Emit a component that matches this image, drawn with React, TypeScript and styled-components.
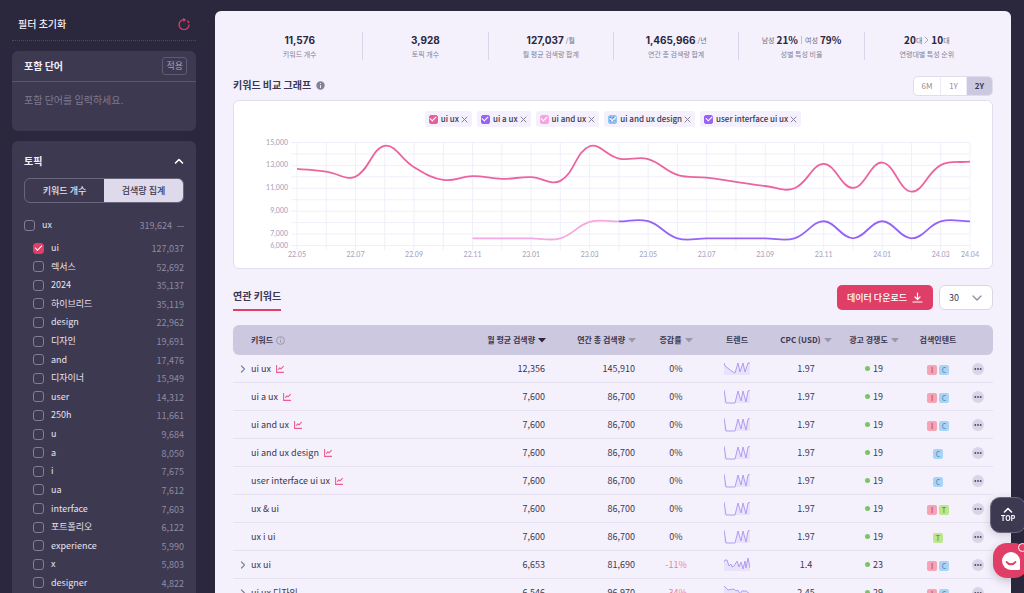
import React, { useState } from "react";
import styled, { createGlobalStyle, css } from "styled-components";

const ink = "#3b3750";
const night = "#2b273d";
const rose = "#e03e66";
const mist = "#f4f1fc";
const lilac = "#ccc8df";

const GlobalStyle = createGlobalStyle`
  * { box-sizing: border-box; }
  body {
    margin: 0;
    background: ${night};
    color: ${ink};
    font-family: "Noto Sans CJK KR", "Noto Sans", sans-serif;
    font-size: 9px;
    line-height: 12px;
  }
  button, input, select, textarea { font: inherit; color: inherit; }
  button { cursor: pointer; }
  h2, p, ul, dl, dd { margin: 0; padding: 0; }
`;

const Page = styled.div`
  display: flex;
  height: 100vh;
  overflow: hidden;
`;

/* ---------- sidebar ---------- */

const Sidebar = styled.aside`
  flex: 0 0 215px;
  display: flex;
  flex-direction: column;
  gap: 10px;
  padding: 8px 19px 0 12px;
  color: #f1eefa;
`;

const ResetBar = styled.div`
  display: flex;
  align-items: center;
  justify-content: space-between;
  height: 33px;
  padding: 0 6px;
  border-bottom: 1px dotted #4c4862;
  font-size: 10px;
  font-weight: 500;
`;

const IconButton = styled.button`
  display: inline-flex;
  align-items: center;
  justify-content: center;
  padding: 0;
  border: 0;
  background: none;
`;

const Card = styled.section<{ $fill?: boolean }>`
  display: flex;
  flex-direction: column;
  border-radius: 6px;
  background: #3d3951;
  ${(p) =>
    p.$fill &&
    css`
      flex: 1;
      border-radius: 6px 6px 0 0;
    `}
`;

const CardHead = styled.div<{ $line?: boolean }>`
  display: flex;
  align-items: center;
  justify-content: space-between;
  height: 31px;
  padding: ${(p) => (p.$line ? "0 9px 0 12px" : "9px 12px 0")};
  border-bottom: ${(p) => (p.$line ? "1px solid #5a566d" : "0")};
`;

const CardTitle = styled.h2`
  font-size: 10px;
  font-weight: 700;
`;

const ApplyButton = styled.button`
  height: 18px;
  padding: 0 3px;
  border: 1px solid #5f5b73;
  border-radius: 3px;
  background: none;
  color: #a5a1b6;
`;

const WordInput = styled.textarea`
  display: block;
  width: 100%;
  height: 49px;
  padding: 12px;
  border: 0;
  outline: 0;
  resize: none;
  background: none;
  font-size: 10px;
  &::placeholder { color: #7d798f; opacity: 1; }
`;

const Switch = styled.div`
  display: flex;
  height: 25px;
  margin: 6px 12px 13px;
  border: 1px solid #69657d;
  border-radius: 6px;
  overflow: hidden;
`;

const SwitchButton = styled.button<{ $on?: boolean }>`
  flex: 1;
  padding: 0;
  border: 0;
  font-weight: 500;
  background: ${(p) => (p.$on ? "#dedaec" : "transparent")};
  color: ${(p) => (p.$on ? ink : "#e6e3f0")};
`;

const Check = styled.input<{ $tone?: string; $small?: boolean; $dotted?: boolean }>`
  appearance: none;
  flex: none;
  display: grid;
  place-items: center;
  width: ${(p) => (p.$small ? 9 : 11)}px;
  height: ${(p) => (p.$small ? 9 : 11)}px;
  margin: 0;
  border: 1px solid #827e95;
  border-radius: ${(p) => (p.$small ? 2 : 3)}px;
  &:checked {
    border-color: ${(p) => p.$tone ?? rose};
    background: ${(p) =>
      p.$dotted
        ? `radial-gradient(circle, #6f86ea 25%, ${p.$tone} 60%) 0 0 / 3px 3px`
        : p.$tone ?? rose};
  }
  &:checked::after {
    content: "";
    width: ${(p) => (p.$small ? 5 : 6)}px;
    height: 3px;
    margin-bottom: 2px;
    border: solid #fff;
    border-width: 0 0 1px 1px;
    transform: rotate(-45deg);
  }
`;

const TopicRow = styled.div<{ $root?: boolean }>`
  display: flex;
  align-items: center;
  justify-content: space-between;
  height: 18px;
  margin: ${(p) => (p.$root ? "0 12px 5px" : "0 12px 0 21px")};
  color: #8f8ba1;
`;

const TopicLabel = styled.label`
  display: flex;
  align-items: center;
  gap: 7px;
  color: #e6e3f0;
`;

const TopicTotal = styled.span`
  display: flex;
  align-items: center;
  gap: 5px;
  padding-top: 2px;
`;

const Dash = styled.i`
  width: 7px;
  height: 1px;
  background: #706c84;
`;

const TopicList = styled.div`
  flex: 1;
  display: flex;
  flex-direction: column;
  justify-content: space-between;
  padding-bottom: 1px;
`;

/* ---------- main panel ---------- */

const Panel = styled.main`
  flex: 1;
  min-width: 0;
  margin: 11px 13px 0 0;
  padding: 21px 18px 0;
  border-radius: 6px 6px 0 0;
  background: ${mist};
  overflow: hidden;
`;

const Stats = styled.dl`
  display: grid;
  grid-template-columns: repeat(6, 1fr);
  padding: 0 4px;
`;

const Stat = styled.div`
  display: flex;
  flex-direction: column-reverse;
  align-items: center;
  justify-content: center;
  gap: 3px;
  height: 28px;
  & + & { border-left: 1px solid #dad5ea; }
`;

const StatLabel = styled.dt`
  font-size: 7px;
  line-height: 10px;
  color: #858199;
`;

const StatValue = styled.dd`
  display: flex;
  align-items: center;
  gap: 2px;
  font-size: 7px;
  color: #6f6b85;
  white-space: nowrap;
`;

const Figure = styled.b<{ $geometric?: boolean }>`
  font-family: ${(p) => (p.$geometric ? "Inter, " : "")}"Noto Sans CJK KR", sans-serif;
  font-size: 10px;
  font-weight: 700;
  color: ${night};
`;

const Age = styled.span`
  display: flex;
  align-items: center;
`;

const Pipe = styled.i`
  width: 1px;
  height: 8px;
  margin: 0 1px;
  background: #c3bfd3;
`;

const SectionBar = styled.div`
  display: flex;
  align-items: center;
  justify-content: space-between;
`;

const ChartBar = styled(SectionBar)`
  margin: 16px 0 4px;
`;

const Heading = styled.h2`
  display: flex;
  align-items: center;
  gap: 5px;
  padding-bottom: 2px;
  font-size: 10px;
  font-weight: 700;
`;

const Ranges = styled.div`
  display: flex;
  height: 20px;
  border: 1px solid #e0dced;
  border-radius: 5px;
  background: #fff;
  overflow: hidden;
`;

const RangeButton = styled.button<{ $on?: boolean }>`
  width: 26px;
  padding: 0;
  border: 0;
  font-size: 8px;
  font-weight: ${(p) => (p.$on ? 700 : 400)};
  background: ${(p) => (p.$on ? lilac : "transparent")};
  color: ${(p) => (p.$on ? ink : "#8f8ba1")};
  & + & { border-left: 1px solid #eeebf6; }
`;

const ChartCard = styled.section`
  padding-top: 10px;
  border: 1px solid #e2deef;
  border-radius: 6px;
  background: #fff;
`;

const Legend = styled.div`
  display: flex;
  justify-content: center;
  gap: 5px;
`;

const Chip = styled.div`
  display: flex;
  align-items: center;
  gap: 2px;
  height: 16px;
  padding: 0 4px;
  border-radius: 3px;
  background: ${mist};
`;

const ChipLabel = styled.label`
  display: flex;
  align-items: center;
  gap: 3px;
  font-size: 8px;
  font-weight: 500;
  white-space: nowrap;
`;

const ChartSvg = styled.svg`
  display: block;
  width: 100%;
  height: auto;
  text { font: 500 7px Lato, sans-serif; fill: #aaa6bf; }
`;

const TableBar = styled(SectionBar)`
  margin: 15px 0 14px;
`;

const Tab = styled.h2`
  margin-top: 3px;
  padding: 3px 0 7px;
  border-bottom: 2px solid ${rose};
  font-size: 10px;
  font-weight: 700;
`;

const Tools = styled.div`
  display: flex;
  gap: 6px;
`;

const DownloadButton = styled.button`
  display: flex;
  align-items: center;
  gap: 5px;
  height: 25px;
  padding: 0 10px;
  border: 0;
  border-radius: 5px;
  background: ${rose};
  color: #fff;
  font-weight: 500;
`;

const SelectBox = styled.div`
  display: grid;
  align-items: center;
  width: 54px;
  & > * { grid-area: 1 / 1; }
  svg { justify-self: end; margin-right: 11px; pointer-events: none; }
`;

const SizeSelect = styled.select`
  appearance: none;
  width: 100%;
  height: 25px;
  padding: 0 9px;
  border: 1px solid #dad6e8;
  border-radius: 6px;
  background: #fff;
`;

const Table = styled.table`
  width: 100%;
  table-layout: fixed;
  border-collapse: separate;
  border-spacing: 0;
`;

type Align = "left" | "right" | "center";

const HeadCell = styled.th<{ $align: Align; $width?: number }>`
  width: ${(p) => (p.$width ? `${p.$width}px` : "auto")};
  height: 30px;
  padding: ${(p) => (p.$align === "right" ? "0 11px 0 0" : p.$align === "left" ? "0 0 0 18px" : "0")};
  background: ${lilac};
  font-size: 8px;
  font-weight: 700;
  text-align: ${(p) => p.$align};
  white-space: nowrap;
  &:first-child { border-radius: 6px 0 0 6px; }
  &:last-child { border-radius: 0 6px 6px 0; }
`;

const HeadInner = styled.span`
  display: inline-flex;
  align-items: center;
  gap: 3px;
`;

const SortButton = styled.button`
  display: inline-flex;
  align-items: center;
  gap: 3px;
  padding: 0;
  border: 0;
  background: none;
`;

const Cell = styled.td<{ $align?: Align; $drop?: boolean }>`
  height: 28px;
  padding: ${(p) => (p.$align === "right" ? "0 12px 0 0" : p.$align === "left" ? "0 0 0 7px" : "0")};
  border-bottom: 1px solid #e5e1f0;
  text-align: ${(p) => p.$align ?? "center"};
  color: ${(p) => (p.$drop ? "#ee7f9b" : ink)};
  white-space: nowrap;
  svg { vertical-align: middle; }
`;

const ActionCell = styled(Cell)`
  padding-right: 8px;
`;

const Keyword = styled.div`
  display: grid;
  grid-template-columns: 6px auto 1fr;
  align-items: center;
  column-gap: 5px;
`;

const Rivalry = styled.span`
  display: inline-flex;
  align-items: center;
  gap: 3px;
  &::before {
    content: "";
    width: 5px;
    height: 5px;
    border-radius: 50%;
    background: #7cc462;
  }
`;

const Intents = styled.div`
  display: flex;
  justify-content: center;
  gap: 2px;
  padding-top: 2px;
`;

const tones: Record<string, [string, string]> = {
  I: ["#f6a3b2", "#b8405c"],
  C: ["#a9d4f5", "#5c8fbd"],
  T: ["#bfe48c", "#5f9a3c"],
};

const Intent = styled.span<{ $kind: string }>`
  width: 10px;
  height: 10px;
  border-radius: 2px;
  background: ${(p) => tones[p.$kind][0]};
  color: ${(p) => tones[p.$kind][1]};
  font-size: 7px;
  font-weight: 500;
  line-height: 10px;
  text-align: center;
`;

const MoreButton = styled(IconButton)`
  width: 12px;
  height: 12px;
  border-radius: 50%;
  background: #d9d5e8;
  vertical-align: middle;
`;

/* ---------- floating buttons ---------- */

const TopButton = styled.button`
  position: fixed;
  right: -2px;
  bottom: 60px;
  display: flex;
  flex-direction: column;
  align-items: center;
  justify-content: center;
  gap: 1px;
  width: 36px;
  height: 36px;
  padding: 0;
  border: 1px solid #6a667c;
  border-radius: 10px;
  background: #3d3951;
  color: #fff;
  font-family: Inter, sans-serif;
  font-size: 7px;
  font-weight: 700;
  line-height: 10px;
  box-shadow: 0 2px 8px rgba(43, 39, 61, 0.2);
`;

const ChatButton = styled.button`
  position: fixed;
  right: -4px;
  bottom: 15px;
  display: grid;
  place-items: center;
  width: 35px;
  height: 35px;
  padding: 0;
  border: 0;
  border-radius: 14px;
  background: ${rose};
  box-shadow: 0 3px 8px rgba(43, 39, 61, 0.25);
`;

const Unread = styled.i`
  position: absolute;
  top: 0;
  right: 1px;
  width: 9px;
  height: 9px;
  border: 1px solid #fff;
  border-radius: 50%;
  background: ${rose};
`;

/* ---------- icons ---------- */

interface StrokeProps {
  d: string;
  w: number;
  h: number;
  color?: string;
  width?: number;
}

const Stroke = ({ d, w, h, color = "currentColor", width = 1 }: StrokeProps) => (
  <svg width={w} height={h} viewBox={`0 0 ${w} ${h}`} fill="none" stroke={color} strokeWidth={width} strokeLinecap="round" strokeLinejoin="round" aria-hidden>
    <path d={d} />
  </svg>
);

const ResetIcon = () => (
  <svg width="12" height="12" viewBox="0 0 12 12" fill="none" aria-hidden>
    <path d="M6 1.600A5 5 0 1 0 11.100 6.600M11 5.200A5 5 0 0 0 9.400 2.700" stroke={rose} strokeWidth="1.300" />
    <path d="M5 0 8.300 1.700 5.400 3.900z" fill={rose} />
  </svg>
);

const Triangle = ({ on }: { on?: boolean }) => (
  <svg width="8" height="5" viewBox="0 0 8 5" aria-hidden>
    <path d="M0 0h8L4 4.6z" fill={on ? night : "#9a96ab"} />
  </svg>
);

const MiniChart = () => <Stroke w={8} h={8} color="#ee5c92" width={1.1} d="M.6.5v6.900h6.900M2.500 4.500 3.800 2.800l1.200 1 2.400-2.500" />;

const SolidInfo = () => (
  <svg width="9" height="9" viewBox="0 0 9 9" aria-hidden>
    <circle cx="4.5" cy="4.5" r="4.2" fill="#858199" />
    <path d="M4.5 4v3M4.5 2v1" stroke="#e9e6f3" />
  </svg>
);

const OutlineInfo = () => (
  <svg width="9" height="9" viewBox="0 0 9 9" fill="none" stroke="#918da4" strokeWidth=".8" aria-hidden>
    <circle cx="4.5" cy="4.5" r="3.9" />
    <path d="M4.5 4v2.6M4.5 2.2v.9" />
  </svg>
);

const Dots = () => (
  <svg width="8" height="2" viewBox="0 0 8 2" fill="#4b475f" aria-hidden>
    <circle cx="1.3" cy="1" r=".9" />
    <circle cx="4" cy="1" r=".9" />
    <circle cx="6.7" cy="1" r=".9" />
  </svg>
);

/* ---------- data ---------- */

const topics: [string, string][] = [
  ["ui", "127,037"], ["렉서스", "52,692"], ["2024", "35,137"], ["하이브리드", "35,119"],
  ["design", "22,962"], ["디자인", "19,691"], ["and", "17,476"], ["디자이너", "15,949"],
  ["user", "14,312"], ["250h", "11,661"], ["u", "9,684"], ["a", "8,050"], ["i", "7,675"],
  ["ua", "7,612"], ["interface", "7,603"], ["포트폴리오", "6,122"], ["experience", "5,990"],
  ["x", "5,803"], ["designer", "4,822"],
];

const legend: { name: string; tone: string; dotted?: boolean }[] = [
  { name: "ui ux", tone: "#ee5c9a" },
  { name: "ui a ux", tone: "#9a63f7" },
  { name: "ui and ux", tone: "#f3a6dc" },
  { name: "ui and ux design", tone: "#8cc4f2", dotted: true },
  { name: "user interface ui ux", tone: "#9a63f7" },
];

const dip = "0,0 1,6 2,13 11,13 14,1 17,11 19,1 22,12 24,1 26,0";

interface Row {
  word: string;
  open?: boolean;
  charted?: boolean;
  month: string;
  year: string;
  change: string;
  trend: string;
  cpc: string;
  rival: number;
  intents: string;
}

const base = { month: "7,600", year: "86,700", change: "0%", trend: dip, cpc: "1.97", rival: 19 };

const rows: Row[] = [
  { ...base, word: "ui ux", open: true, charted: true, month: "12,356", year: "145,910", trend: "0,1 1,4 5,7 9,10 11,11 14,1 16,10 19,1 21,10 24,1 26,1", intents: "IC" },
  { ...base, word: "ui a ux", charted: true, intents: "IC" },
  { ...base, word: "ui and ux", charted: true, intents: "IC" },
  { ...base, word: "ui and ux design", charted: true, intents: "C" },
  { ...base, word: "user interface ui ux", charted: true, intents: "C" },
  { ...base, word: "ux & ui", intents: "IT" },
  { ...base, word: "ux i ui", intents: "T" },
  { word: "ux ui", open: true, month: "6,653", year: "81,690", change: "-11%", trend: "0,4 1,2 3,2 5,8 7,6 8,9 10,8 13,3 15,9 17,4 19,11 21,3 22,10 24,0 26,10", cpc: "1.4", rival: 23, intents: "IC" },
  { word: "ui ux 디자인", open: true, month: "6,546", year: "96,970", change: "-34%", trend: "0,0 4,4 10,3 12,5 14,4 16,8 18,5 22,5 26,8", cpc: "2.45", rival: 29, intents: "IC" },
];

const columns: { name: string; width?: number; align: Align; sort?: boolean; info?: boolean; active?: boolean }[] = [
  { name: "키워드", align: "left", info: true },
  { name: "월 평균 검색량", width: 90, align: "right", sort: true, active: true },
  { name: "연간 총 검색량", width: 90, align: "right", sort: true },
  { name: "증감률", width: 58, align: "center", sort: true },
  { name: "트렌드", width: 64, align: "center" },
  { name: "CPC (USD)", width: 74, align: "center", sort: true },
  { name: "광고 경쟁도", width: 62, align: "center", sort: true },
  { name: "검색인텐트", width: 66, align: "center" },
  { name: "", width: 22, align: "center" },
];

/* ---------- chart ---------- */

const plot = { left: 63, right: 736, top: 15.5, bottom: 118.5 };
const months = 24;
const px = (i: number) => plot.left + (i * (plot.right - plot.left)) / (months - 1);
const py = (v: number) => plot.bottom - ((v - 6000) / 9000) * (plot.bottom - plot.top);

const mainSeries = [
  12700, 12460, 12020, 14710, 12845, 11730, 12060, 11820, 11970, 11645, 14670, 13600,
  13545, 12170, 11930, 11560, 11200, 11000, 13130, 11030, 13250, 10700, 13020, 13335,
];
const lowSeries = [
  6630, 6630, 6630, 6630, 8060, 8100, 8120, 6630, 6630, 6630, 6630, 6630, 8120, 6630,
  8120, 6630, 8100, 8100,
];

/* Smooth path through the points from..to of a series that starts at month `offset`. */
function curve(values: number[], offset = 0, from = 0, to = values.length - 1, tension = 0.4) {
  const pts = values.map((v, i) => ({ x: px(i + offset), y: py(v) }));
  const handles = pts.map((p, i) => {
    const a = pts[Math.max(i - 1, 0)];
    const b = pts[Math.min(i + 1, pts.length - 1)];
    const d1 = Math.hypot(p.x - a.x, p.y - a.y);
    const d2 = Math.hypot(b.x - p.x, b.y - p.y);
    const f1 = (tension * d1) / (d1 + d2);
    const f2 = (tension * d2) / (d1 + d2);
    return {
      before: [p.x - f1 * (b.x - a.x), p.y - f1 * (b.y - a.y)],
      after: [p.x + f2 * (b.x - a.x), p.y + f2 * (b.y - a.y)],
    };
  });
  let d = `M${pts[from].x} ${pts[from].y}`;
  for (let i = from + 1; i <= to; i++) {
    d += `C${handles[i - 1].after} ${handles[i].before} ${pts[i].x} ${pts[i].y}`;
  }
  return d;
}

const yLabels = [15000, 13000, 11000, 9000, 7000, 6000];
const xLabels: [number, string][] = [
  [0, "22.05"], [2, "22.07"], [4, "22.09"], [6, "22.11"], [8, "23.01"], [10, "23.03"], [12, "23.05"],
  [14, "23.07"], [16, "23.09"], [18, "23.11"], [20, "24.01"], [22, "24.03"], [23, "24.04"],
];

const Chart = () => (
  <ChartSvg viewBox="0 0 758 141" role="img" aria-label="키워드 비교 그래프">
    <g stroke="#f1eff9">
      {Array.from({ length: 10 }, (_, i) => (
        <line key={i} x1={plot.left - 6} x2={plot.right} y1={py(6000 + i * 1000)} y2={py(6000 + i * 1000)} />
      ))}
      {Array.from({ length: months }, (_, i) => (
        <line key={i} x1={px(i)} x2={px(i)} y1={plot.top} y2={plot.bottom + 5} />
      ))}
    </g>
    {yLabels.map((v) => (
      <text key={v} x="54" y={py(v) + 2} textAnchor="end">{v.toLocaleString("en-US")}</text>
    ))}
    {xLabels.map(([i, label]) => (
      <text key={label} x={px(i)} y="130" textAnchor="middle">{label}</text>
    ))}
    <g fill="none" strokeWidth="1.8">
      <path d={curve(mainSeries)} stroke="#ec649f" />
      <path d={curve(lowSeries, 6, 0, 5)} stroke="#f3a9de" />
      <path d={curve(lowSeries, 6, 5)} stroke="#9563f5" />
    </g>
  </ChartSvg>
);

const Spark = ({ points }: { points: string }) => (
  <svg width="26" height="14" viewBox="0 0 26 14" aria-hidden>
    <polygon points={`${points} 26,13 0,13`} fill="#e8e3f8" />
    <polyline points={points} fill="none" stroke="#b19cf5" strokeLinejoin="round" />
  </svg>
);

/* ---------- page ---------- */

export default function App() {
  const [mode, setMode] = useState("volume");
  const [range, setRange] = useState("2Y");

  return (
    <Page>
      <GlobalStyle />
      <Sidebar>
        <ResetBar>
          필터 초기화
          <IconButton aria-label="필터 초기화"><ResetIcon /></IconButton>
        </ResetBar>
        <Card>
          <CardHead $line>
            <CardTitle id="include-title">포함 단어</CardTitle>
            <ApplyButton>적용</ApplyButton>
          </CardHead>
          <WordInput aria-labelledby="include-title" placeholder="포함 단어를 입력하세요." />
        </Card>
        <Card $fill>
          <CardHead>
            <CardTitle>토픽</CardTitle>
            <IconButton aria-label="토픽 접기"><Stroke w={10} h={6} d="M1.5 5 5 1.5 8.5 5" width={1.6} color="#fff" /></IconButton>
          </CardHead>
          <Switch>
            <SwitchButton $on={mode === "count"} onClick={() => setMode("count")}>키워드 개수</SwitchButton>
            <SwitchButton $on={mode === "volume"} onClick={() => setMode("volume")}>검색량 집계</SwitchButton>
          </Switch>
          <TopicRow $root>
            <TopicLabel><Check type="checkbox" />ux</TopicLabel>
            <TopicTotal>319,624<Dash /></TopicTotal>
          </TopicRow>
          <TopicList>
            {topics.map(([name, total], i) => (
              <TopicRow key={name}>
                <TopicLabel><Check type="checkbox" defaultChecked={i === 0} />{name}</TopicLabel>
                <TopicTotal>{total}</TopicTotal>
              </TopicRow>
            ))}
          </TopicList>
        </Card>
      </Sidebar>

      <Panel>
        <Stats>
          <Stat><StatLabel>키워드 개수</StatLabel><StatValue><Figure $geometric>11,576</Figure></StatValue></Stat>
          <Stat><StatLabel>토픽 개수</StatLabel><StatValue><Figure $geometric>3,928</Figure></StatValue></Stat>
          <Stat><StatLabel>월 평균 검색량 합계</StatLabel><StatValue><Figure $geometric>127,037</Figure>/월</StatValue></Stat>
          <Stat><StatLabel>연간 총 검색량 합계</StatLabel><StatValue><Figure $geometric>1,465,966</Figure>/년</StatValue></Stat>
          <Stat>
            <StatLabel>성별 특성 비율</StatLabel>
            <StatValue>남성<Figure>21%</Figure><Pipe />여성<Figure>79%</Figure></StatValue>
          </Stat>
          <Stat>
            <StatLabel>연령대별 특성 순위</StatLabel>
            <StatValue>
              <Age><Figure>20</Figure>대</Age>
              <Stroke w={5} h={8} color="#aaa6bb" d="M1 1 4 4 1 7" />
              <Age><Figure>10</Figure>대</Age>
            </StatValue>
          </Stat>
        </Stats>

        <ChartBar>
          <Heading>키워드 비교 그래프 <SolidInfo /></Heading>
          <Ranges>
            {["6M", "1Y", "2Y"].map((r) => (
              <RangeButton key={r} $on={r === range} onClick={() => setRange(r)}>{r}</RangeButton>
            ))}
          </Ranges>
        </ChartBar>
        <ChartCard>
          <Legend>
            {legend.map(({ name, tone, dotted }) => (
              <Chip key={name}>
                <ChipLabel><Check type="checkbox" $small $tone={tone} $dotted={dotted} defaultChecked />{name}</ChipLabel>
                <IconButton aria-label={`${name} 삭제`}><Stroke w={7} h={7} d="M1 1l5 5M6 1 1 6" color="#858199" /></IconButton>
              </Chip>
            ))}
          </Legend>
          <Chart />
        </ChartCard>

        <TableBar>
          <Tab>연관 키워드</Tab>
          <Tools>
            <DownloadButton>
              데이터 다운로드
              <Stroke w={11} h={11} d="M5.5 1v6M3 5l2.500 2.500L8 5M1 10h9" width={1.2} />
            </DownloadButton>
            <SelectBox>
              <SizeSelect aria-label="페이지당 행 수" defaultValue="30">
                <option>30</option>
                <option>50</option>
                <option>100</option>
              </SizeSelect>
              <Stroke w={10} h={6} d="M1 1l4 4 4-4" width={1.3} color="#8f8ba1" />
            </SelectBox>
          </Tools>
        </TableBar>

        <Table>
          <thead>
            <tr>
              {columns.map((c) => (
                <HeadCell key={c.name} $align={c.align} $width={c.width}>
                  {c.sort ? (
                    <SortButton>{c.name}<Triangle on={c.active} /></SortButton>
                  ) : (
                    <HeadInner>{c.name}{c.info && <OutlineInfo />}</HeadInner>
                  )}
                </HeadCell>
              ))}
            </tr>
          </thead>
          <tbody>
            {rows.map((r) => (
              <tr key={r.word}>
                <Cell $align="left">
                  <Keyword>
                    <span>{r.open && <Stroke w={6} h={8} d="M1.5 1 4.5 4l-3 3" color="#858199" width={1.2} />}</span>
                    <span>{r.word}</span>
                    {r.charted && <span><MiniChart /></span>}
                  </Keyword>
                </Cell>
                <Cell $align="right">{r.month}</Cell>
                <Cell $align="right">{r.year}</Cell>
                <Cell $drop={r.change.startsWith("-")}>{r.change}</Cell>
                <Cell><Spark points={r.trend} /></Cell>
                <Cell>{r.cpc}</Cell>
                <Cell><Rivalry>{r.rival}</Rivalry></Cell>
                <Cell>
                  <Intents>{[...r.intents].map((k) => <Intent key={k} $kind={k}>{k}</Intent>)}</Intents>
                </Cell>
                <ActionCell><MoreButton aria-label={`${r.word} 더보기`}><Dots /></MoreButton></ActionCell>
              </tr>
            ))}
          </tbody>
        </Table>
      </Panel>

      <TopButton>
        <Stroke w={10} h={6} d="M1.5 5 5 1.5 8.5 5" width={1.6} />
        TOP
      </TopButton>
      <ChatButton aria-label="채팅 상담">
        <svg width="20" height="20" viewBox="0 0 20 20" aria-hidden>
          <path d="M10 1a9 9 0 1 0 0 18h7.500a1.500 1.500 0 0 0 1.500-1.500V10a9 9 0 0 0-9-9z" fill="#fff" />
          <path d="M5.600 11c2 3 6.800 3 8.800 0" fill="none" stroke={rose} strokeWidth="2" strokeLinecap="round" />
        </svg>
        <Unread />
      </ChatButton>
    </Page>
  );
}
